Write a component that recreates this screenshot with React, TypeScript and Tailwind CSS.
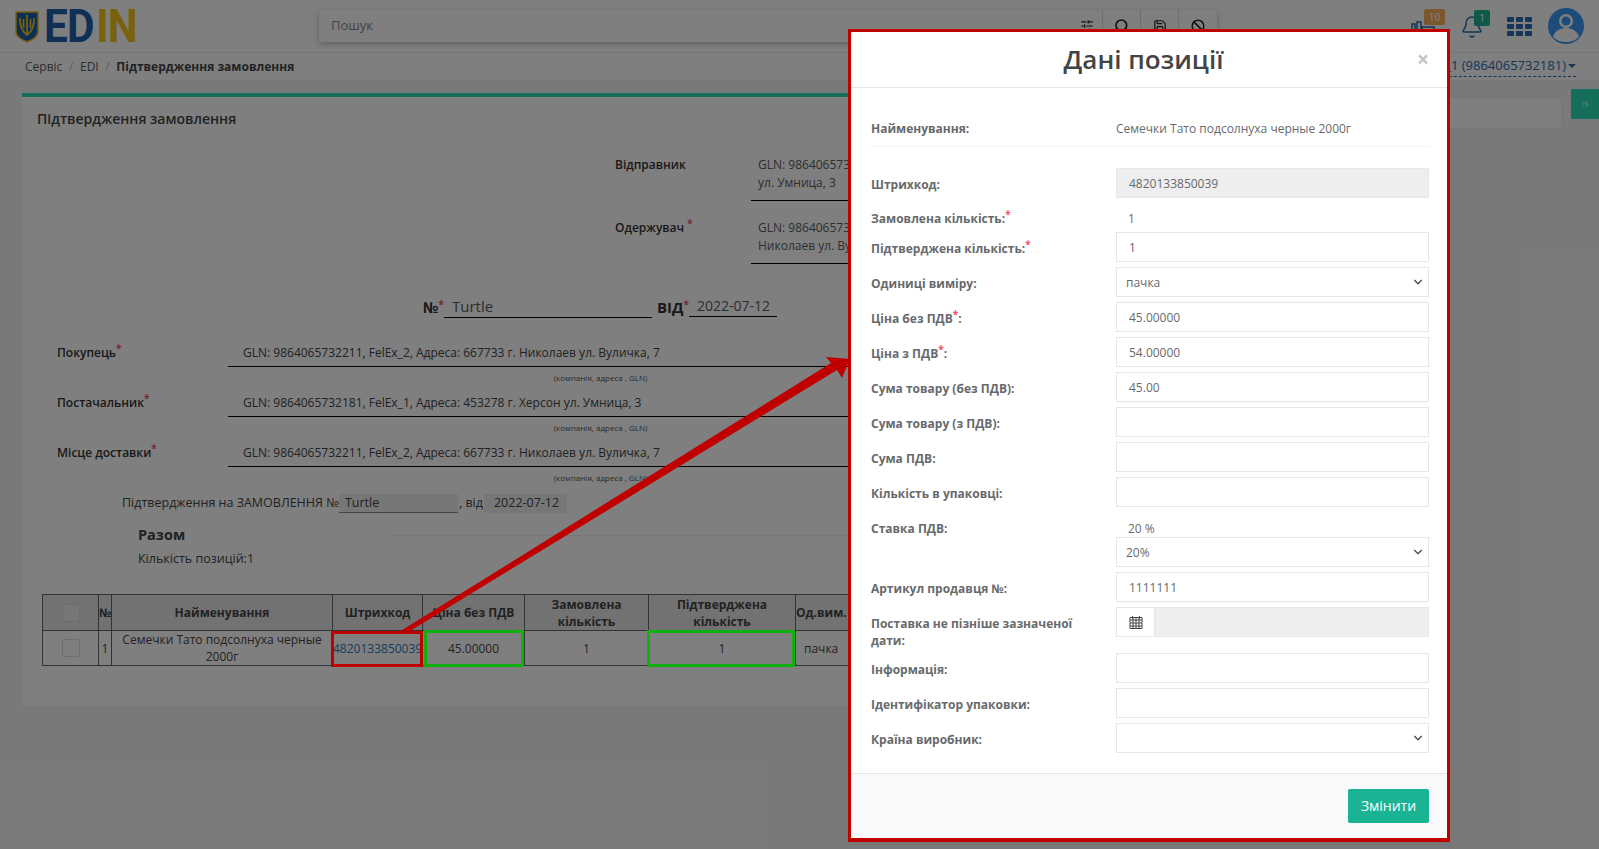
import { Ban, ChevronDown, ChevronsRight, Save, Search, SlidersHorizontal, Bell } from "lucide-react";

const PARTIES = [
  { label: "Покупець", text: "GLN: 9864065732211, FelEx_2, Адреса: 667733 г. Николаев ул. Вуличка, 7" },
  { label: "Постачальник", text: "GLN: 9864065732181, FelEx_1, Адреса: 453278 г. Херсон ул. Умница, 3" },
  { label: "Місце доставки", text: "GLN: 9864065732211, FelEx_2, Адреса: 667733 г. Николаев ул. Вуличка, 7" },
];

const FIELDS = [
  { label: "Ціна без ПДВ", star: true, colon: true, value: "45.00000" },
  { label: "Ціна з ПДВ", star: true, colon: true, value: "54.00000" },
  { label: "Сума товару (без ПДВ):", value: "45.00" },
  { label: "Сума товару (з ПДВ):", value: "" },
  { label: "Сума ПДВ:", value: "" },
  { label: "Кількість в упаковці:", value: "" },
];

const inputCls = "h-[30px] w-[313px] shrink-0 border border-[#e5e6e7] bg-white px-3 text-[12px] leading-[29px] text-[#676a6c]";
const labelCls = "w-[245px] shrink-0 text-[12px] font-bold leading-[17px] text-[#676a6c]";

function Star() {
  return <sup className="text-[10px] font-bold text-[#ed5565]">*</sup>;
}

function Row({ label, children }: { label: React.ReactNode; children: React.ReactNode }) {
  return (
    <div className="mb-[5px] flex items-center">
      <div className={`${labelCls} pt-[2px]`}>{label}</div>
      {children}
    </div>
  );
}

function SelectBox({ value }: { value: string }) {
  return (
    <div className={`${inputCls} flex items-center justify-between !pl-[9px] !pr-[3px]`}>
      <span>{value}</span>
      <ChevronDown size={14} strokeWidth={2} className="text-[#444]" />
    </div>
  );
}

function Party({ label, text }: { label: string; text: string }) {
  return (
    <div className="flex h-[50px]">
      <div className="w-[171px] pt-[4px] text-[12px] font-semibold text-[#333]">
        {label}
        <Star />
      </div>
      <div className="w-[700px]">
        <div className="h-[27px] border-b border-black pl-[15px] pt-[4px] text-[12px] leading-[18px] text-[#444]">{text}</div>
        <div className="w-[745px] pt-[5px] text-center text-[8px] leading-[12px] text-[#555]">(компанія, адреса , GLN)</div>
      </div>
    </div>
  );
}

function Logo() {
  return (
    <div className="flex items-center gap-[5px]">
      <svg width="24" height="33" viewBox="0 0 24 33">
        <path d="M1 2h22v20c0 5-6 8-11 10C7 30 1 27 1 22z" fill="#1a5fa8" stroke="#f2c21a" strokeWidth="1.5" />
        <path d="M12 5v20M5 8c0 8 1 12 7 17 6-5 7-9 7-17M8.500 9v9M15.500 9v9" fill="none" stroke="#f2c21a" strokeWidth="1.700" />
      </svg>
      <div className="flex w-[92px] origin-left scale-x-[0.92] items-center font-['Roboto',sans-serif] text-[46px] font-bold leading-[46px] tracking-[-1px]">
        <span className="text-[#1f5fa8]">ED</span>
        <span className="ml-[3px] text-[#f2c21a]">IN</span>
      </div>
    </div>
  );
}

function BooksIcon() {
  return (
    <svg width="28" height="18" viewBox="0 0 28 18" fill="none" stroke="#2a6cb0" strokeWidth="1.500">
      <path d="M1 3h3v13H1zM6 1h4v15H6zM11 6h12v10H11zM14 9h6M14 12h6" />
    </svg>
  );
}

function Avatar() {
  return (
    <svg width="36" height="36" viewBox="0 0 36 36">
      <circle cx="18" cy="18" r="18" fill="#3a98f0" />
      <circle cx="18" cy="13" r="7" fill="white" />
      <path d="M5 29c2-7 8-9 13-9s11 2 13 9c-3 3-8 5-13 5S8 32 5 29z" fill="white" />
      <circle cx="18" cy="13" r="4.500" fill="#3a98f0" />
    </svg>
  );
}

function Page() {
  return (
    <div className="min-h-[849px] bg-[#f3f3f4] font-['Open_Sans',sans-serif] text-[12px] text-[#5a5c5e]">
      <header className="flex h-[53px] items-center border-b border-[#e7eaec] bg-white pl-[15px]">
        <Logo />
        <div className="ml-[183px] flex h-[32px] w-[898px] bg-white shadow-[0_2px_6px_rgba(0,0,0,0.25)]">
          <div className="flex flex-1 items-center justify-between border-r border-[#ddd] pl-3 pr-[8px] text-[13px] text-[#888]">
            Пошук
            <SlidersHorizontal size={14} className="text-[#222]" />
          </div>
          <div className="flex w-[38px] items-center justify-center border-r border-[#ddd]"><Search size={16} strokeWidth={2.5} className="text-[#222]" /></div>
          <div className="flex w-[38px] items-center justify-center border-r border-[#ddd]"><Save size={14} className="text-[#222]" /></div>
          <div className="flex w-[38px] items-center justify-center"><Ban size={14} strokeWidth={2.5} className="text-[#222]" /></div>
        </div>
        <div className="ml-auto flex items-center pr-[15px]">
          <div className="relative mr-[21px] mt-[8px]">
            <BooksIcon />
            <span className="absolute -top-[12px] left-[13px] flex h-[16px] w-[21px] items-center justify-center rounded-[2px] bg-[#f8ac59] text-[10px] text-white">10</span>
          </div>
          <div className="relative mr-[23px] mt-[2px]">
            <Bell size={24} strokeWidth={1.500} className="text-[#2a6cb0]" />
            <span className="absolute -top-[5px] left-[14px] flex h-[16px] w-[16px] items-center justify-center rounded-[2px] bg-[#1ab394] text-[10px] text-white">1</span>
          </div>
          <div className="mr-[16px] grid grid-cols-3 gap-[2px]">
            {Array.from({ length: 9 }).map((_, i) => (
              <div key={i} className="h-[5px] w-[7px] rounded-[1px] bg-[#2a6cb0]" />
            ))}
          </div>
          <Avatar />
        </div>
      </header>

      <div className="flex h-[28px] items-center justify-between border-b border-[#e7eaec] bg-white pl-[25px] pr-[23px] text-[12px]">
        <div>
          Сервіс <span className="mx-[3.5px] text-[#bbb]">/</span> EDI <span className="mx-[3.5px] text-[#bbb]">/</span> <b className="text-[#444]">Підтвердження замовлення</b>
        </div>
        <div className="flex items-center gap-[2px] border-b border-dashed border-[#2a6cb0] text-[13px] text-[#2a6cb0]">
          FelEx_1 (9864065732181)
          <span className="h-0 w-0 border-x-[4px] border-t-[4px] border-x-transparent border-t-[#2a6cb0]" />
        </div>
      </div>

      <div className="flex items-start">
        <main className="ml-[22px] mt-[12px] h-[613px] w-[1300px] shrink-0 border-t-4 border-[#28dcb4] bg-white pl-[15px] pt-[12px]">
          <h2 className="text-[14px] font-semibold leading-[20px] text-[#444]">Підтвердження замовлення</h2>

          <div className="ml-[578px] mt-[22px] flex h-[63px]">
            <div className="w-[136px] pt-[5px] font-semibold text-[#333]">Відправник</div>
            <div className="h-[50px] flex-1 border-b border-black pl-[7px] pt-[5px] leading-[18px]">GLN: 9864065732181<br />ул. Умница, 3</div>
          </div>
          <div className="ml-[578px] flex h-[79px]">
            <div className="w-[136px] pt-[5px] font-semibold text-[#333]">Одержувач <Star /></div>
            <div className="h-[50px] flex-1 border-b border-black pl-[7px] pt-[5px] leading-[18px]">GLN: 9864065732211<br />Николаев ул. Вуличка, 7</div>
          </div>

          <div className="ml-[386px] flex h-[25px] items-end text-[14px]">
            <b className="w-[21px] text-[15px] text-[#333]">№<Star /></b>
            <div className="h-[24px] w-[208px] border-b border-black pl-[8px] text-[15px] leading-[24px]">Turtle</div>
            <b className="ml-[5px] w-[32px] text-[15px] text-[#333]">ВІД<Star /></b>
            <div className="mb-[1px] h-[23px] w-[88px] border-b border-black pl-[8px] pt-[2px] text-[14px] leading-[20px]">2022-07-12</div>
          </div>

          <div className="ml-[20px] mt-[22px]">
            {PARTIES.map((p) => (
              <Party key={p.label} {...p} />
            ))}
          </div>

          <div className="ml-[85px] mt-[4px] flex h-[19px] items-center text-[12.500px] text-[#444]">
            <span>Підтвердження на ЗАМОВЛЕННЯ №</span>
            <div className="h-[19px] w-[119px] border-b border-[#888] bg-[#eee] pl-[6px] leading-[18px]">Turtle</div>
            <span className="ml-[1px]">, від</span>
            <div className="ml-[1px] h-[19px] w-[83px] bg-[#eee] pl-[10px] leading-[18px]">2022-07-12</div>
          </div>

          <div className="ml-[101px] mt-[11px] flex items-center">
            <b className="w-[255px] text-[14.500px] leading-[22px] text-[#444]">Разом</b>
            <div className="flex-1 border-t border-dotted border-[#ddd]" />
          </div>
          <div className="ml-[101px] mt-[1px] text-[12.500px] leading-[24px] text-[#444]">Кількість позицій:1</div>

          <table className="ml-[5px] mt-[23px] w-[900px] table-fixed border-collapse border border-[#666] text-center text-[12px]">
            <colgroup>
              {[56, 13, 221, 90, 102, 124, 147, 147].map((w, i) => (
                <col key={i} style={{ width: w }} />
              ))}
            </colgroup>
            <thead>
              <tr className="h-[36px] bg-[#e4e4e4] font-bold leading-[17px] text-[#444]">
                <th className="border border-[#666]"><div className="mx-auto h-[18px] w-[18px] rounded-[2px] border border-[#ddd] bg-[#eee]" /></th>
                <th className="overflow-hidden border border-[#666]">№</th>
                <th className="border border-[#666]">Найменування</th>
                <th className="border border-[#666]">Штрихкод</th>
                <th className="border border-[#666]">Ціна без ПДВ</th>
                <th className="border border-[#666]">Замовлена кількість</th>
                <th className="border border-[#666]">Підтверджена кількість</th>
                <th className="border border-[#666] text-left">Од.вим.</th>
              </tr>
            </thead>
            <tbody>
              <tr className="h-[35px] leading-[17px] text-[#444]">
                <td className="border border-[#666]"><div className="mx-auto h-[18px] w-[18px] rounded-[2px] border border-[#ddd] bg-white" /></td>
                <td className="border border-[#666]">1</td>
                <td className="border border-[#666]">Семечки Тато подсолнуха черные 2000г</td>
                <td className="border border-[#666] text-[#337ab7]">4820133850039</td>
                <td className="border border-[#666]">45.00000</td>
                <td className="border border-[#666]">1</td>
                <td className="border border-[#666]">1</td>
                <td className="border border-[#666] pl-[8px] text-left">пачка</td>
              </tr>
            </tbody>
          </table>
        </main>

        <aside className="mt-[16px] h-[32px] w-[240px] shrink-0 rounded-[2px] border border-[#e7eaec] bg-white" />
        <div className="ml-[9px] mt-[8px] flex h-[30px] w-[28px] shrink-0 items-center justify-center bg-[#28dcb4] text-white">
          <ChevronsRight size={12} />
        </div>
      </div>
    </div>
  );
}

function Modal() {
  return (
    <div className="absolute left-[848px] top-[29px] h-[813px] w-[602px] border-[3px] border-b-4 border-[#c00000] bg-white font-['Open_Sans',sans-serif] text-[#676a6c]">
      <div className="relative flex h-[56px] items-center justify-center border-b border-[#e5e5e5] pb-[2px] pr-[11px]">
        <h4 className="text-[26px] font-semibold leading-[36px] text-[#444]">Дані позиції</h4>
        <span className="absolute right-[18px] top-[14px] text-[21px] font-bold leading-[27px] text-[#c4c4c4]">×</span>
      </div>

      <div className="pl-[20px] pr-[18px] pt-[29px]">
        <div className="flex h-[30px] items-start border-b border-dotted border-[#e7eaec] pt-[3px] leading-[18px]">
          <div className={labelCls}>Найменування:</div>
          <div className="text-[12px] leading-[17px]">Семечки Тато подсолнуха черные 2000г</div>
        </div>

        <div className="mt-[21px]" />
        <Row label="Штрихкод:">
          <div className={`${inputCls} !bg-[#eeeeee]`}>4820133850039</div>
        </Row>
        <div className="mb-[2px] flex h-[27px] items-center pt-[4px]">
          <div className={labelCls}>Замовлена кількість:<Star /></div>
          <span className="pl-3 text-[12px]">1</span>
        </div>
        <Row label={<>Підтверджена кількість:<Star /></>}>
          <div className={inputCls}>1</div>
        </Row>
        <Row label="Одиниці виміру:">
          <SelectBox value="пачка" />
        </Row>
        {FIELDS.map((f) => (
          <Row key={f.label} label={<>{f.label}{f.star && <Star />}{f.colon && ":"}</>}>
            <div className={inputCls}>{f.value}</div>
          </Row>
        ))}
        <div className="mb-[5px] flex items-start">
          <div className={`${labelCls} pt-[8px]`}>Ставка ПДВ:</div>
          <div>
            <div className="h-[25px] pl-3 pt-[8px] text-[12px] leading-[17px]">20 %</div>
            <SelectBox value="20%" />
          </div>
        </div>
        <Row label="Артикул продавця №:">
          <div className={inputCls}>1111111</div>
        </Row>
        <div className="mb-[4px] flex items-start">
          <div className={`${labelCls} pr-[30px] pt-[8px]`}>Поставка не пізніше зазначеної дати:</div>
          <div className="flex h-[30px] w-[313px] shrink-0 border border-[#e5e6e7] bg-[#eeeeee]">
            <div className="flex w-[38px] items-center justify-center border-r border-[#e5e6e7] bg-white">
              <svg width="14" height="14" viewBox="0 0 14 14" fill="none" stroke="#444" strokeWidth="1">
                <path d="M1 2.500h12v11H1zM1 5h12M1 8h12M1 11h12M4 2.500v11M7 2.500v11M10 2.500v11M3.500 1v2.500M10.500 1v2.500" />
              </svg>
            </div>
          </div>
        </div>
        <Row label="Інформація:">
          <div className={inputCls} />
        </Row>
        <Row label="Ідентифікатор упаковки:">
          <div className={inputCls} />
        </Row>
        <Row label="Країна виробник:">
          <SelectBox value="" />
        </Row>
      </div>

      <div className="absolute inset-x-0 bottom-0 flex h-[65px] items-center justify-end border-t border-[#e5e5e5] bg-[#f8f9fb] pb-[1px] pr-[18px]">
        <button className="h-[34px] w-[81px] rounded-[2px] bg-[#1ab394] text-[14px] text-white">Змінити</button>
      </div>
    </div>
  );
}

export default function App() {
  return (
    <div className="relative h-[849px] w-[1599px] overflow-hidden">
      <Page />
      {/* затемнення під модалкою */}
      <div className="absolute inset-0 bg-black/50" />

      {/* анотації */}
      <div className="absolute left-[331px] top-[631px] h-[36px] w-[92px] border-[3px] border-[#c00000]" />
      <div className="absolute left-[424px] top-[630px] h-[37px] w-[100px] border-[3px] border-[#10b010]" />
      <div className="absolute left-[647px] top-[630px] h-[37px] w-[148px] border-[3px] border-[#10b010]" />
      <svg className="absolute left-0 top-0" width="1599" height="849">
        <polygon points="399,632 831,363 826,357 850,359 842,378 837,370 405,634" fill="#c00000" />
      </svg>

      <Modal />
    </div>
  );
}
